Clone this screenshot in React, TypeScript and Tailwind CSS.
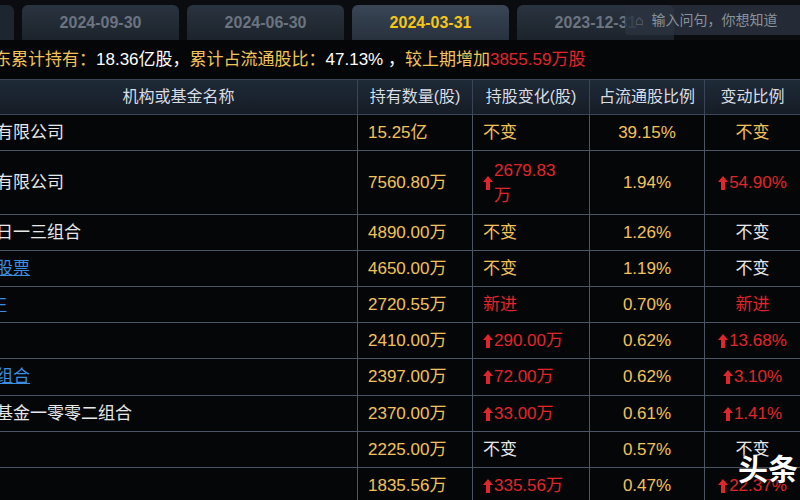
import React from "react";

const F = { fontFamily: '"Liberation Sans","Noto Sans CJK SC",sans-serif' };

type Cell = { t: string; c: string; up?: boolean };
const Y = "text-[#f2c35a]";
const R = "text-[#e0262b]";
const W = "text-[#e8e8e8]";

const rows: { name: string; link?: boolean; h: string; cells: Cell[] }[] = [
  { name: "有限公司", h: "h-[36px]", cells: [{ t: "15.25亿", c: Y }, { t: "不变", c: Y }, { t: "39.15%", c: Y }, { t: "不变", c: Y }] },
  { name: "有限公司", h: "h-[64px]", cells: [{ t: "7560.80万", c: Y }, { t: "2679.83万", c: R, up: true }, { t: "1.94%", c: Y }, { t: "54.90%", c: R, up: true }] },
  { name: "日一三组合", h: "h-[36px]", cells: [{ t: "4890.00万", c: Y }, { t: "不变", c: Y }, { t: "1.26%", c: Y }, { t: "不变", c: W }] },
  { name: "股票", link: true, h: "h-[36px]", cells: [{ t: "4650.00万", c: Y }, { t: "不变", c: Y }, { t: "1.19%", c: Y }, { t: "不变", c: W }] },
  { name: "F", link: true, h: "h-[36px]", cells: [{ t: "2720.55万", c: Y }, { t: "新进", c: R }, { t: "0.70%", c: Y }, { t: "新进", c: R }] },
  { name: "", h: "h-[36px]", cells: [{ t: "2410.00万", c: Y }, { t: "290.00万", c: R, up: true }, { t: "0.62%", c: Y }, { t: "13.68%", c: R, up: true }] },
  { name: "组合", link: true, h: "h-[37px]", cells: [{ t: "2397.00万", c: Y }, { t: "72.00万", c: R, up: true }, { t: "0.62%", c: Y }, { t: " 3.10%", c: R, up: true }] },
  { name: "基金一零零二组合", h: "h-[36px]", cells: [{ t: "2370.00万", c: Y }, { t: "33.00万", c: R, up: true }, { t: "0.61%", c: Y }, { t: " 1.41%", c: R, up: true }] },
  { name: "", h: "h-[36px]", cells: [{ t: "2225.00万", c: Y }, { t: "不变", c: W }, { t: "0.57%", c: Y }, { t: "不变", c: W }] },
  { name: "", h: "h-[36px]", cells: [{ t: "1835.56万", c: Y }, { t: "335.56万", c: R, up: true }, { t: "0.47%", c: Y }, { t: "22.37%", c: R, up: true }] },
];

const widths = ["w-[358px]", "w-[115px]", "w-[117px]", "w-[115px]", "flex-1"];
const aligns = ["justify-start", "justify-start pl-[10px]", "justify-start pl-[10px]", "justify-center", "justify-center"];

function Arrow() {
  return (
    <svg width="10" height="14" viewBox="0 0 10 14" className="mr-[1px] shrink-0">
      <path d="M5 0 L10 6 H7 V14 H3 V6 H0 Z" fill="#e0262b" />
    </svg>
  );
}

export default function App() {
  return (
    <div className="w-[800px] h-[500px] overflow-hidden bg-[#050608] relative" style={F}>
      <div className="h-[40px] flex items-end gap-[8px] bg-[#0a0c10]">
        <div className="w-[14px] h-[35px] rounded-tr-md bg-[#1d2530]" />
        {["2024-09-30", "2024-06-30", "2024-03-31", "2023-12-31"].map((d, i) => (
          <div
            key={d}
            className={`w-[157px] h-[35px] rounded-t-md flex items-center justify-center text-[16px] font-bold ${
              i === 2 ? "bg-gradient-to-b from-[#3a4656] to-[#27313e] text-[#f5c518]" : "bg-gradient-to-b from-[#2a3340] to-[#1c232c] text-[#6b7480]"
            }`}
          >
            {d}
          </div>
        ))}
      </div>
      <div className="absolute left-[625px] top-[5px] w-[180px] h-[30px] bg-[#2a3340]/80 rounded-sm flex items-center pl-[10px] text-[14px] text-[#8a929c] whitespace-nowrap">
        <span className="mr-[8px] text-[#6b7480]">⌂</span>输入问句，你想知道
      </div>
      <div className="h-[40px] flex items-center text-[17px] border-b border-[#3a4658] whitespace-nowrap ml-[-6px]">
        <span className="text-[#f2c35a]">东累计持有：</span>
        <span className="text-white">18.36亿股，</span>
        <span className="text-[#f2c35a]">累计占流通股比：</span>
        <span className="text-white">47.13% ，</span>
        <span className="text-[#f2c35a]">较上期增加</span>
        <span className="text-[#e0262b]">3855.59万股</span>
      </div>
      <div className="h-[35px] flex bg-gradient-to-b from-[#1f2a38] to-[#151c26] text-[16px] text-[#d8dde4] border-b border-[#3a4658]">
        {["机构或基金名称", "持有数量(股)", "持股变化(股)", "占流通股比例", "变动比例"].map((h, i) => (
          <div key={h} className={`${widths[i]} flex items-center justify-center ${i < 4 ? "border-r border-[#3a4658]" : ""}`}>
            {h}
          </div>
        ))}
      </div>
      {rows.map((r, ri) => (
        <div key={ri} className={`${r.h} flex border-b border-[#4a5568] text-[17px]`}>
          <div className={`${widths[0]} flex items-center border-r border-[#4a5568]`}>
            <span className={`ml-[-4px] ${r.link ? "text-[#3b8fe0] underline" : "text-[#e8e8e8]"}`}>{r.name}</span>
          </div>
          {r.cells.map((c, ci) => (
            <div key={ci} className={`${widths[ci + 1]} flex items-center ${aligns[ci + 1]} ${ci < 3 ? "border-r border-[#4a5568]" : ""} ${c.c}`}>
              {c.up && <Arrow />}
              <span className={ri === 1 && ci === 1 ? "w-[70px] leading-[25px]" : ""}>{c.t}</span>
            </div>
          ))}
        </div>
      ))}
      <div className="absolute right-[2px] bottom-[10px] text-white text-[30px] font-bold" style={{ fontFamily: '"Noto Sans CJK SC",sans-serif', textShadow: "0 0 3px #000" }}>
        头条
      </div>
    </div>
  );
}
